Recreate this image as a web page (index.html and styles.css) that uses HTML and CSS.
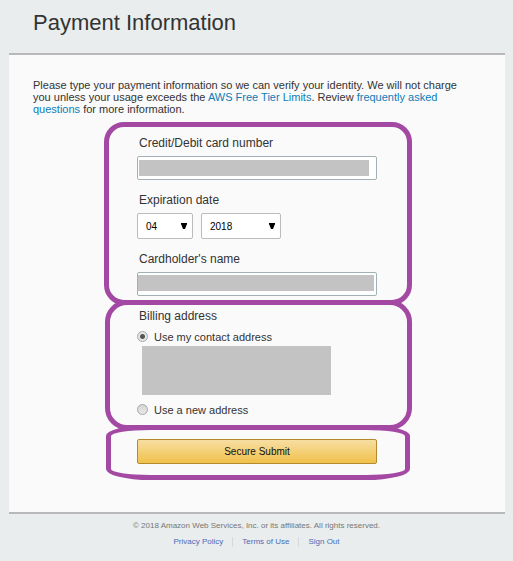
FILE: index.html
```html
<!DOCTYPE html>
<html lang="en">
<head>
<meta charset="utf-8">
<title>Payment Information</title>
<link rel="stylesheet" href="styles.css">
</head>
<body>
<h1 class="title">Payment Information</h1>
<main class="panel">
  <p class="intro">Please type your payment information so we can verify your identity. We will not charge you unless your usage exceeds the <a href="#">AWS Free Tier Limits</a>. Review <a href="#">frequently asked questions</a> for more information.</p>
  <form class="form">
    <section class="group group-card">
      <label class="label" for="card">Credit/Debit card number</label>
      <input class="field masked-card" id="card" type="text">
      <label class="label" for="month">Expiration date</label>
      <div class="dates">
        <span class="select month">
          <select id="month"><option>04</option></select>
          <svg class="arrow" viewBox="0 0 6 7" aria-hidden="true"><path d="M0 0H6V1L4 6H2L0 1Z"/></svg>
        </span>
        <span class="select year">
          <select aria-label="Expiration year"><option>2018</option></select>
          <svg class="arrow" viewBox="0 0 6 7" aria-hidden="true"><path d="M0 0H6V1L4 6H2L0 1Z"/></svg>
        </span>
      </div>
      <label class="label" for="holder">Cardholder's name</label>
      <input class="field masked-name" id="holder" type="text">
    </section>
    <section class="group group-address">
      <h2 class="label">Billing address</h2>
      <label class="choice"><input type="radio" name="address" checked>Use my contact address</label>
      <div class="address"></div>
      <label class="choice"><input type="radio" name="address">Use a new address</label>
    </section>
    <section class="group group-submit">
      <button class="submit" type="button">Secure Submit</button>
    </section>
  </form>
</main>
<footer class="footer">
  <p class="copyright">© 2018 Amazon Web Services, Inc. or its affiliates. All rights reserved.</p>
  <nav class="links">
    <a href="#">Privacy Policy</a>
    <a href="#">Terms of Use</a>
    <a href="#">Sign Out</a>
  </nav>
</footer>
</body>
</html>
```
FILE: styles.css
```css
* { box-sizing: border-box; }
body {
  margin: 0;
  background: #e9eded;
  color: #333;
  font-family: "Liberation Sans", Arial, sans-serif;
  font-size: 11px;
}
a { color: #0e7cb8; text-decoration: none; }
.title {
  margin: 0;
  padding: 10px 33px 17px;
  font-size: 22px;
  line-height: 26px;
  font-weight: 400;
}
.panel {
  margin: 0 8px 0 9px;
  padding: 24px 24px 32px;
  background: #fafafa;
  border: solid #b9b9b9;
  border-width: 2px 0;
}
.intro { margin: 0 0 7px; padding-right: 14px; line-height: 12px; }
.form { width: 308px; margin: 0 auto; position: relative; left: 1px; }
.group {
  display: flex;
  flex-direction: column;
  border: 5px solid #a349a4;
}
.group-card { padding: 8px 30px 4px 28px; border-radius: 20px; }
.group-address {
  margin: -5px 0 0 1px;
  padding: 3px 30px 8px 27px;
  border-radius: 22px;
}
.group-submit {
  margin: -5px 2px 0;
  padding: 9px 28px 11px 26px;
  border-radius: 44px / 11px;
}
.label {
  margin: 0 2px 5px;
  font-size: 12px;
  line-height: 16px;
  font-weight: 400;
}
.field {
  width: 100%;
  height: 24px;
  padding: 0 4px;
  border: 1px solid #a2b1b3;
  border-radius: 2px;
  background: #fff linear-gradient(#c3c3c3, #c3c3c3) no-repeat;
}
.masked-card {
  margin-bottom: 12px;
  background-position: 1px 3px;
  background-size: 230px 16px;
}
.masked-name {
  background-position: 0 2px;
  background-size: 236px 16px;
}
.dates { display: flex; gap: 8px; margin-bottom: 12px; }
.select { position: relative; }
.month { width: 56px; }
.year { width: 80px; }
.select select {
  display: block;
  width: 100%;
  height: 26px;
  padding: 0 8px;
  appearance: none;
  border: 1px solid #bbb;
  border-radius: 2px;
  background: #fff;
  color: #000;
  font: 10px "Liberation Sans", Arial, sans-serif;
}
.arrow {
  position: absolute;
  top: 10px;
  right: 6px;
  width: 6px;
  height: 7px;
  pointer-events: none;
}
.choice {
  display: flex;
  align-items: center;
  gap: 6px;
  line-height: 14px;
}
.group-address .label { margin-bottom: 6px; }
.choice input {
  appearance: none;
  flex: none;
  width: 11px;
  height: 11px;
  margin: 0 0 2px;
  border: 1px solid #a6a6a6;
  border-radius: 50%;
  background: linear-gradient(#d6d6d6, #e8e8e8);
}
.choice input:checked {
  background: radial-gradient(circle, #555 0 2px, #e6e6e6 3px);
}
.address {
  height: 49px;
  margin: 2px 46px 8px 5px;
  background: #c3c3c3;
}
.submit {
  height: 25px;
  padding: 0;
  border: 1px solid #b38b2e;
  border-radius: 2px;
  background: linear-gradient(#f7dea2, #f0c14b);
  color: #111;
  font: 10px "Liberation Sans", Arial, sans-serif;
}
.footer {
  padding: 7px 0 14px;
  text-align: center;
  font-size: 8px;
  line-height: 10px;
  color: #777;
}
.copyright { margin: 0 0 6px; }
.links { display: flex; justify-content: center; }
.links a { padding: 0 9px; color: #4a6cb8; }
.links a + a { border-left: 1px solid #d5d9d9; }
```
